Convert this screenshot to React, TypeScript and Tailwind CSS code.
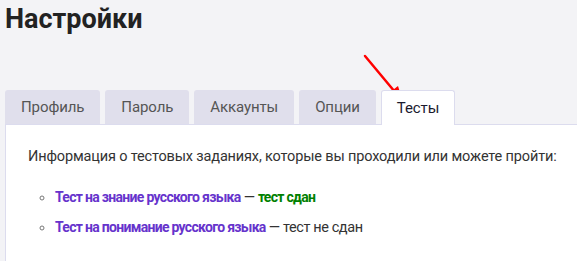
import React from 'react';

const tabs = ['Профиль', 'Пароль', 'Аккаунты', 'Опции', 'Тесты'];

const App: React.FC = () => {
  const active = 'Тесты';

  return (
    <div className="relative min-h-[261px] w-[577px] overflow-hidden bg-[#f3f3f6] text-[#333] [font-family:Roboto,sans-serif]">
      <h1 className="px-[5px] pt-[1px] text-[27px] leading-[36px] font-bold text-[#222]">Настройки</h1>

      <div className="mt-[53px] flex gap-[5px] pl-[5px]">
        {tabs.map((tab) =>
          tab === active ? (
            <div
              key={tab}
              className="relative z-10 -mb-px flex h-[35px] items-center rounded-t-[3px] border border-b-0 border-[#dcdcee] bg-white px-[15px] text-[15px] tracking-[-0.1px] text-[#1a1a2e]"
            >
              {tab}
            </div>
          ) : (
            <div
              key={tab}
              className="flex h-[34px] items-center rounded-t-[3px] bg-[#e0dfec] px-[16px] text-[15px] tracking-[-0.1px] text-[#555]"
            >
              {tab}
            </div>
          )
        )}
      </div>

      <div className="ml-[5px] min-h-[140px] border-t border-l border-[#dcdcee] bg-white pt-[20px] pl-[22px] text-[14.5px] tracking-[-0.15px]">
        <p className="leading-[24px]">Информация о тестовых заданиях, которые вы проходили или можете пройти:</p>
        <ul className="mt-[16px] list-[circle] pl-[27px] leading-[24px] tracking-[-0.4px] marker:text-[#777]">
          <li className="mb-[5px]">
            <a className="text-[14px] font-bold tracking-[-0.7px] text-[#6633cc]">Тест на знание русского языка</a> —{' '}
            <b className="text-[14px] tracking-[-0.7px] text-[#008000]">тест сдан</b>
          </li>
          <li>
            <a className="text-[14px] font-bold tracking-[-0.7px] text-[#6633cc]">Тест на понимание русского языка</a> — тест не
            сдан
          </li>
        </ul>
      </div>

      <svg className="absolute top-0 left-0" width="577" height="261" viewBox="0 0 577 261">
        <line x1="365" y1="56" x2="395" y2="92" stroke="#f00" strokeWidth="2.5" strokeLinecap="round" />
        <polygon points="403,102 389,93 398,86" fill="#f00" />
      </svg>
    </div>
  );
};

export default App;
